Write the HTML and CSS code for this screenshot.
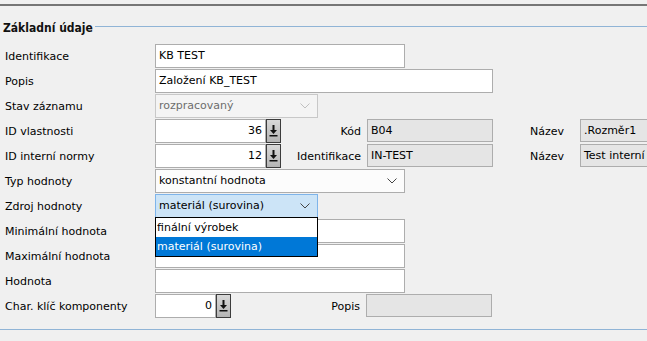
FILE: index.html
```html
<!DOCTYPE html>
<html lang="cs">
<head>
    <meta charset="UTF-8">
    <title>Základní údaje</title>
    <link rel="stylesheet" href="styles.css">
</head>
<body>
    <div class="topbar"></div>

    <!-- Sekce: základní údaje -->
    <section class="group">
        <div class="legend">
            <span class="legend-text">Základní údaje</span>
            <span class="legend-line"></span>
        </div>

        <div class="row">
            <label class="lbl">Identifikace</label>
            <div class="field w250">KB TEST</div>
        </div>

        <div class="row">
            <label class="lbl">Popis</label>
            <div class="field w338">Založení KB_TEST</div>
        </div>

        <div class="row">
            <label class="lbl">Stav záznamu</label>
            <div class="field select disabled w163">rozpracovaný<svg class="chev" width="10" height="6" viewBox="0 0 10 6"><path d="M0.5 0.5l4.5 4.5 4.5-4.5" fill="none" stroke="#c0c0c0"/></svg></div>
        </div>

        <div class="row">
            <label class="lbl">ID vlastnosti</label>
            <div class="field num w110">36</div>
            <button class="pick"><svg width="9" height="14" viewBox="0 0 9 14"><path d="M3.5 1h2v5h2.5l-3.5 4-3.5-4h2.5z" fill="#111"/><rect x="0.5" y="11" width="8" height="1.5" fill="#111"/></svg></button>
            <label class="lbl2">Kód</label>
            <div class="field ro w126">B04</div>
            <label class="lbl3">Název</label>
            <div class="field ro w126">.Rozměr1</div>
        </div>

        <div class="row">
            <label class="lbl">ID interní normy</label>
            <div class="field num w110">12</div>
            <button class="pick"><svg width="9" height="14" viewBox="0 0 9 14"><path d="M3.5 1h2v5h2.5l-3.5 4-3.5-4h2.5z" fill="#111"/><rect x="0.5" y="11" width="8" height="1.5" fill="#111"/></svg></button>
            <label class="lbl2">Identifikace</label>
            <div class="field ro w126">IN-TEST</div>
            <label class="lbl3">Název</label>
            <div class="field ro w126">Test interní</div>
        </div>

        <div class="row">
            <label class="lbl">Typ hodnoty</label>
            <div class="field select w250">konstantní hodnota<svg class="chev" width="10" height="6" viewBox="0 0 10 6"><path d="M0.5 0.5l4.5 4.5 4.5-4.5" fill="none" stroke="#444"/></svg></div>
        </div>

        <div class="row">
            <label class="lbl">Zdroj hodnoty</label>
            <div class="dropwrap">
                <div class="field select open w163">materiál (surovina)<svg class="chev" width="10" height="6" viewBox="0 0 10 6"><path d="M0.5 0.5l4.5 4.5 4.5-4.5" fill="none" stroke="#444"/></svg></div>
                <ul class="droplist">
                    <li>finální výrobek</li>
                    <li class="sel">materiál (surovina)</li>
                </ul>
            </div>
        </div>

        <div class="row">
            <label class="lbl">Minimální hodnota</label>
            <div class="field w250"></div>
        </div>

        <div class="row">
            <label class="lbl">Maximální hodnota</label>
            <div class="field w250"></div>
        </div>

        <div class="row">
            <label class="lbl">Hodnota</label>
            <div class="field w250"></div>
        </div>

        <div class="row">
            <label class="lbl">Char. klíč komponenty</label>
            <div class="field num w61">0</div>
            <button class="pick"><svg width="9" height="14" viewBox="0 0 9 14"><path d="M3.5 1h2v5h2.5l-3.5 4-3.5-4h2.5z" fill="#111"/><rect x="0.5" y="11" width="8" height="1.5" fill="#111"/></svg></button>
            <label class="lbl2 wide">Popis</label>
            <div class="field ro w126"></div>
        </div>
    </section>

    <div class="bottomline"></div>
</body>
</html>
```

FILE: styles.css
```css
/* Globální styl */
body {
    margin: 0;
    background-color: #f0f0f0;
    font-family: "DejaVu Sans", Verdana, sans-serif;
    font-size: 11px;
    color: #000;
    overflow: hidden;
}
.topbar {
    height: 4px;
    border-bottom: 2px solid #767676;
}
/* Skupina */
.group {
    padding-top: 14px;
    overflow: hidden;
}
.legend {
    display: flex;
    align-items: center;
    height: 16px;
    margin-bottom: 8px;
}
.legend-text {
    font-family: "DejaVu Sans Condensed", "DejaVu Sans", sans-serif;
    font-weight: bold;
    font-size: 12px;
    padding-left: 3px;
    padding-right: 2px;
    color: #111;
}
.legend-line {
    flex-grow: 1;
    height: 1px;
    background-color: #90b4d6;
    margin-top: -3px;
}
/* Řádky */
.row {
    display: flex;
    align-items: center;
    height: 24px;
    margin-bottom: 1px;
}
.lbl {
    width: 150px;
    padding-left: 5px;
    flex-shrink: 0;
}
.lbl2 {
    width: 80px;
    text-align: right;
    padding-right: 6px;
    flex-shrink: 0;
}
.lbl2.wide {
    width: 129px;
}
.lbl3 {
    width: 50px;
    padding-left: 37px;
    flex-shrink: 0;
}
/* Pole */
.field {
    box-sizing: border-box;
    height: 24px;
    line-height: 22px;
    border: 1px solid #adadad;
    background-color: #fff;
    padding: 0 3px;
    white-space: nowrap;
    overflow: hidden;
    flex-shrink: 0;
    position: relative;
}
.w250 { width: 250px; }
.w338 { width: 338px; }
.w163 { width: 163px; }
.w110 { width: 111px; }
.w61 { width: 61px; }
.w126 { width: 126px; }
.num {
    text-align: right;
}
.ro {
    background-color: #e5e5e5;
    height: 23px;
    align-self: flex-start;
}
.select {
    padding-right: 20px;
    background-color: #fcfcfc;
}
.select.disabled {
    background-color: #f4f4f4;
    border-color: #c8c8c8;
    color: #6d6d6d;
}
.select.open {
    background-color: #cce4f7;
    border-color: #7eb4ea;
}
.chev {
    position: absolute;
    right: 7px;
    top: 8px;
}
/* Tlačítko výběru */
.pick {
    box-sizing: border-box;
    width: 15px;
    height: 24px;
    padding: 0;
    border: 1px solid #3c3c3c;
    background: linear-gradient(#d8d8d8, #b4b4b4);
    display: flex;
    align-items: center;
    justify-content: center;
    flex-shrink: 0;
}
/* Rozbalený seznam */
.dropwrap {
    position: relative;
}
.droplist {
    position: absolute;
    left: 0;
    top: 23px;
    box-sizing: border-box;
    width: 163px;
    margin: 0;
    padding: 0;
    list-style: none;
    background-color: #fff;
    border: 1px solid #000;
    z-index: 2;
}
.droplist li {
    height: 19px;
    line-height: 19px;
    padding-left: 1px;
}
.droplist li.sel {
    background-color: #0078d7;
    color: #fff;
}
.bottomline {
    margin-top: 10px;
    height: 1px;
    background-color: #90b4d6;
}
```
